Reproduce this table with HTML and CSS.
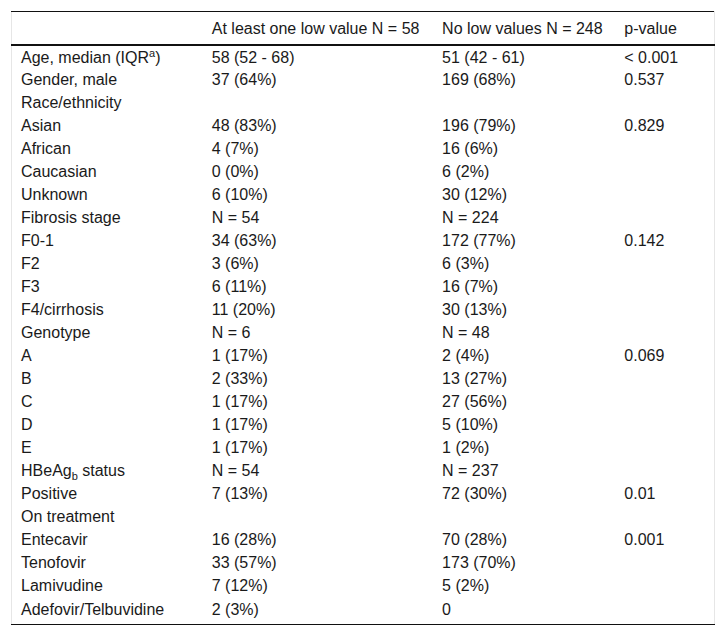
FILE: index.html
```html
<!DOCTYPE html>
<html>
<head>
<meta charset="utf-8">
<link rel="stylesheet" href="styles.css">
</head>
<body>
<div class="wrap">
<table class="data">
<colgroup>
<col class="c1"><col class="c2"><col class="c3"><col class="c4">
</colgroup>
<thead>
<tr><th></th><th>At least one low value N = 58</th><th>No low values N = 248</th><th>p-value</th></tr>
</thead>
<tbody>
<tr><td>Age, median (IQR<sup>a</sup>)</td><td>58 (52 - 68)</td><td>51 (42 - 61)</td><td>&lt; 0.001</td></tr>
<tr><td>Gender, male</td><td>37 (64%)</td><td>169 (68%)</td><td>0.537</td></tr>
<tr><td>Race/ethnicity</td><td></td><td></td><td></td></tr>
<tr><td>Asian</td><td>48 (83%)</td><td>196 (79%)</td><td>0.829</td></tr>
<tr><td>African</td><td>4 (7%)</td><td>16 (6%)</td><td></td></tr>
<tr><td>Caucasian</td><td>0 (0%)</td><td>6 (2%)</td><td></td></tr>
<tr><td>Unknown</td><td>6 (10%)</td><td>30 (12%)</td><td></td></tr>
<tr><td>Fibrosis stage</td><td>N = 54</td><td>N = 224</td><td></td></tr>
<tr><td>F0-1</td><td>34 (63%)</td><td>172 (77%)</td><td>0.142</td></tr>
<tr><td>F2</td><td>3 (6%)</td><td>6 (3%)</td><td></td></tr>
<tr><td>F3</td><td>6 (11%)</td><td>16 (7%)</td><td></td></tr>
<tr><td>F4/cirrhosis</td><td>11 (20%)</td><td>30 (13%)</td><td></td></tr>
<tr><td>Genotype</td><td>N = 6</td><td>N = 48</td><td></td></tr>
<tr><td>A</td><td>1 (17%)</td><td>2 (4%)</td><td>0.069</td></tr>
<tr><td>B</td><td>2 (33%)</td><td>13 (27%)</td><td></td></tr>
<tr><td>C</td><td>1 (17%)</td><td>27 (56%)</td><td></td></tr>
<tr><td>D</td><td>1 (17%)</td><td>5 (10%)</td><td></td></tr>
<tr><td>E</td><td>1 (17%)</td><td>1 (2%)</td><td></td></tr>
<tr><td>HBeAg<sub>b</sub> status</td><td>N = 54</td><td>N = 237</td><td></td></tr>
<tr><td>Positive</td><td>7 (13%)</td><td>72 (30%)</td><td>0.01</td></tr>
<tr><td>On treatment</td><td></td><td></td><td></td></tr>
<tr><td>Entecavir</td><td>16 (28%)</td><td>70 (28%)</td><td>0.001</td></tr>
<tr><td>Tenofovir</td><td>33 (57%)</td><td>173 (70%)</td><td></td></tr>
<tr><td>Lamivudine</td><td>7 (12%)</td><td>5 (2%)</td><td></td></tr>
<tr class="last"><td>Adefovir/Telbuvidine</td><td>2 (3%)</td><td>0</td><td></td></tr>
</tbody>
</table>
</div>
</body>
</html>
```
FILE: styles.css
```css
html, body {
  margin: 0;
  padding: 0;
  background: #fff;
}
.wrap {
  padding: 11px 0 0 11px;
}
.data {
  border-collapse: collapse;
  table-layout: fixed;
  width: 704px;
  font-family: "Liberation Sans", Arial, sans-serif;
  font-size: 16px;
  color: #1a1a1a;
  border-top: 1px solid #111;
  border-bottom: 1px solid #111;
  border-left: 1px solid #e6e6e6;
  border-right: 1px solid #e6e6e6;
}
.c1 { width: 191px; }
.c2 { width: 230px; }
.c3 { width: 182px; }
.c4 { width: 99px; }
.data th {
  font-weight: normal;
  text-align: left;
  height: 31px;
  padding: 1px 0 0 9px;
  border-bottom: 2px solid #111;
  vertical-align: middle;
}
.data td {
  height: 23px;
  box-sizing: border-box;
  padding: 1px 0 0 9px;
  vertical-align: middle;
  white-space: nowrap;
  line-height: 18px;
}
.data tr.last td {
  height: 27px;
  vertical-align: top;
  padding-top: 4px;
}
.data sup {
  font-size: 11px;
  line-height: 0;
  vertical-align: 6px;
}
.data sub {
  font-size: 11px;
  line-height: 0;
  vertical-align: -4px;
}
```
